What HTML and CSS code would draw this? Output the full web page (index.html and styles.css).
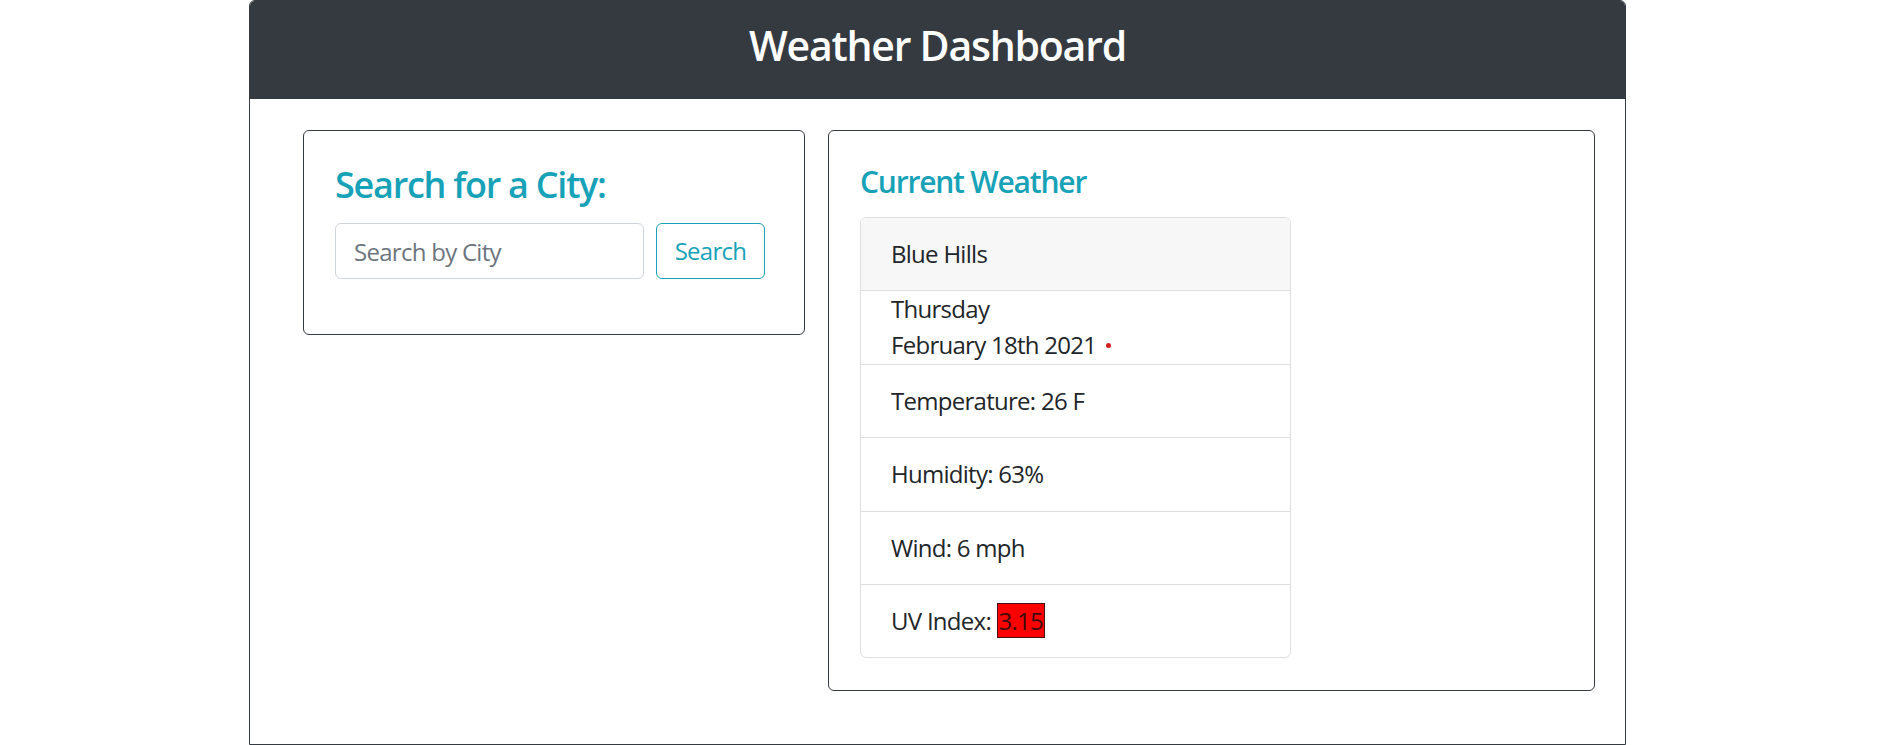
FILE: index.html
```html
<!DOCTYPE html>
<html lang="en">
<head>
<meta charset="utf-8">
<title>Weather Dashboard</title>
<link rel="stylesheet" href="styles.css">
</head>
<body>
<div class="app">
  <header class="app-header">
    <h1 class="app-title">Weather Dashboard</h1>
  </header>
  <main class="app-main">
    <section class="panel search-panel">
      <h2 class="panel-title search-title">Search for a City:</h2>
      <form class="search-form">
        <input class="search-input" type="text" placeholder="Search by City">
        <button class="search-btn" type="button">Search</button>
      </form>
    </section>
    <section class="panel weather-panel">
      <h3 class="panel-title weather-title">Current Weather</h3>
      <ul class="weather-list">
        <li class="weather-item weather-city">Blue Hills</li>
        <li class="weather-item weather-date">
          <div>Thursday</div>
          <div>February 18th 2021<span class="weather-dot"></span></div>
        </li>
        <li class="weather-item">Temperature: 26 F</li>
        <li class="weather-item">Humidity: 63%</li>
        <li class="weather-item">Wind: 6 mph</li>
        <li class="weather-item">UV Index: <span class="uv-badge">3.15</span></li>
      </ul>
    </section>
  </main>
</div>
</body>
</html>
```

FILE: styles.css
```css
* {
  box-sizing: border-box;
}

html, body {
  margin: 0;
  padding: 0;
  background: #ffffff;
}

body {
  font-family: "Open Sans", "Noto Sans", sans-serif;
  font-size: 24px;
  line-height: 36px;
  color: #212529;
  letter-spacing: -0.03em;
}

.app {
  width: 1377px;
  margin-left: 249px;
  border: 1px solid #343a40;
  border-radius: 6px 6px 0 0;
  overflow: hidden;
}

.app-header {
  background: #343a40;
  height: 98px;
  padding-top: 19px;
  text-align: center;
}

.app-title {
  margin: 0;
  color: #ffffff;
  font-size: 41px;
  line-height: 50px;
  font-weight: 600;
  letter-spacing: -0.03em;
}

.app-main {
  display: flex;
  align-items: flex-start;
  gap: 23px;
  padding: 31px 30px 53px 53px;
}

.panel {
  border: 1px solid #343a40;
  border-radius: 6px;
  padding: 30px 30px 30px 31px;
}

.panel-title {
  margin: 0;
  color: #17a2b8;
  font-weight: 600;
}

.search-panel {
  width: 502px;
  flex: none;
  padding-bottom: 31px;
}

.search-title {
  font-size: 36px;
  line-height: 46px;
  margin-top: 1px;
  margin-bottom: 15px;
  letter-spacing: -0.035em;
}

.search-form {
  display: flex;
  gap: 12px;
  margin: 0 0 24px;
}

.search-input {
  width: 309px;
  height: 56px;
  border: 1px solid #ced4da;
  border-radius: 6px;
  padding: 0 18px;
  font: inherit;
  letter-spacing: inherit;
  color: #495057;
}

.search-input::placeholder {
  color: #6c757d;
}

.search-btn {
  width: 109px;
  height: 56px;
  padding: 0;
  border: 1px solid #17a2b8;
  border-radius: 6px;
  background: #ffffff;
  color: #17a2b8;
  font: inherit;
  letter-spacing: inherit;
}

.weather-panel {
  flex: 1;
  padding-bottom: 32px;
}

.weather-title {
  font-size: 30px;
  line-height: 38px;
  margin-top: 2px;
  margin-bottom: 16px;
  letter-spacing: -0.04em;
}

.weather-list {
  list-style: none;
  margin: 0;
  padding: 0;
  width: 431px;
  border: 1px solid rgba(0, 0, 0, 0.125);
  border-radius: 6px;
  overflow: hidden;
}

.weather-item {
  padding: 18px 30px 18.4px;
  border-top: 1px solid rgba(0, 0, 0, 0.125);
}

.weather-item:first-child {
  border-top: none;
}

.weather-city {
  background: #f7f7f7;
}

.weather-date {
  padding-top: 0;
  padding-bottom: 0.4px;
}

.weather-dot {
  display: inline-block;
  width: 5px;
  height: 5px;
  border-radius: 50%;
  background: #d61c1c;
  margin-left: 10px;
  margin-bottom: 6px;
}

.uv-badge {
  background: #ff0000;
  border: 1px solid #4a1010;
  color: #3d0b0b;
  padding: 0 1px;
}
```
